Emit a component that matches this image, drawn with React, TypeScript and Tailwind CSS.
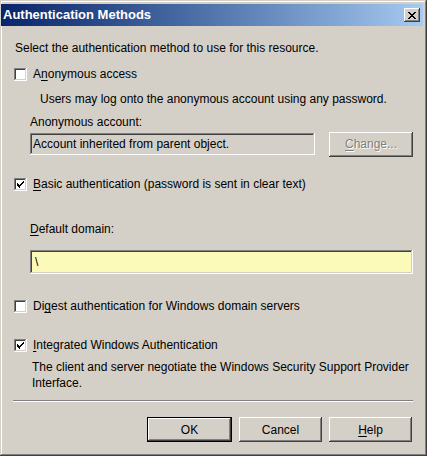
import React from 'react';

// classic 3D bevels
const raised = 'shadow-[inset_-1px_-1px_#404040,inset_1px_1px_#ffffff,inset_-2px_-2px_#808080,inset_2px_2px_#d4d0c8]';
const sunken = 'shadow-[inset_-1px_-1px_#ffffff,inset_1px_1px_#808080,inset_-2px_-2px_#d4d0c8,inset_2px_2px_#404040]';

const Checkbox = ({ checked }: { checked?: boolean }) => (
  <div className={`w-[13px] h-[13px] bg-white flex items-center justify-center shrink-0 ${sunken}`}>
    {checked && (
      <svg width="7" height="7" viewBox="0 0 7 7" shapeRendering="crispEdges">
        <path d="M0 2h1v1h-1zM0 3h2v1h-2zM0 4h3v1h-3zM1 5h2v1h-2zM2 6h1v1h-1zM3 3h1v2h-1zM4 2h1v2h-1zM5 1h1v2h-1zM6 0h1v2h-1z" fill="#000" />
      </svg>
    )}
  </div>
);

const CheckRow = ({ checked, children }: { checked?: boolean; children: React.ReactNode }) => (
  <div className="flex items-center h-[16px] ml-[14px] gap-[6px]">
    <Checkbox checked={checked} />
    <span>{children}</span>
  </div>
);

const Button = ({ children, isDefault, disabled, w = 'w-[83px]' }: { children: React.ReactNode; isDefault?: boolean; disabled?: boolean; w?: string }) => (
  <div className={`${w} h-[25px] ${isDefault ? 'border border-black' : ''}`}>
    <div className={`w-full h-full flex items-center justify-center ${raised} ${disabled ? 'text-[#808080] [text-shadow:1px_1px_0_#ffffff]' : ''}`}>
      {children}
    </div>
  </div>
);

const U = ({ children }: { children: React.ReactNode }) => <span className="underline underline-offset-2">{children}</span>;

export default function App() {
  return (
    <div className="bg-white w-[431px] h-[457px] font-['Liberation_Sans',Arial,sans-serif] text-[12px] leading-[16px] text-black">
      <div className={`w-[427px] h-[456px] bg-[#d4d0c8] pt-[4px] pr-[4px] pl-[1px] ${'shadow-[inset_-1px_-1px_#404040,inset_1px_1px_#d4d0c8,inset_-2px_-2px_#808080,inset_2px_2px_#ffffff]'}`}>
        {/* title bar */}
        <div className="h-[22px] flex items-center justify-between bg-gradient-to-r from-[#0a246a] to-[#a6caf0] pl-[2px] pr-[3px]">
          <span className="text-white font-bold text-[13px]">Authentication Methods</span>
          <div className={`w-[16px] h-[14px] bg-[#d4d0c8] flex items-center justify-center ${raised}`}>
            <svg width="8" height="7" viewBox="0 0 8 7" shapeRendering="crispEdges">
              <path d="M0 0h2v1h-2zM6 0h2v1h-2zM1 1h2v1h-2zM5 1h2v1h-2zM2 2h4v1h-4zM3 3h2v1h-2zM2 4h4v1h-4zM1 5h2v1h-2zM5 5h2v1h-2zM0 6h2v1h-2zM6 6h2v1h-2z" fill="#000" />
            </svg>
          </div>
        </div>

        <div className="flex flex-col -ml-[1px]">
          <p className="mt-[14px] ml-[15px]">Select the authentication method to use for this resource.</p>

          <div className="mt-[10px]">
            <CheckRow>A<U>n</U>onymous access</CheckRow>
          </div>
          <p className="mt-[9px] ml-[40px]">Users may log onto the anonymous account using any password.</p>
          <p className="mt-[7px] ml-[30px]">Anonymous account:</p>
          <div className="mt-[2px] ml-[30px] flex items-center gap-[14px] h-[24px]">
            <div className={`w-[285px] h-[22px] flex items-center pl-[3px] ${sunken}`}>Account inherited from parent object.</div>
            <Button disabled w="w-[84px]"><U>C</U>hange...</Button>
          </div>

          <div className="mt-[20px]">
            <CheckRow checked><U>B</U>asic authentication (password is sent in clear text)</CheckRow>
          </div>
          <p className="mt-[29px] ml-[30px]"><U>D</U>efault domain:</p>
          <div className={`mt-[13px] ml-[30px] w-[383px] h-[24px] bg-[#fbfab9] flex items-center pl-[5px] ${sunken}`}>\</div>

          <div className="mt-[24px]">
            <CheckRow>Di<U>g</U>est authentication for Windows domain servers</CheckRow>
          </div>
          <div className="mt-[23px]">
            <CheckRow checked><U>I</U>ntegrated Windows Authentication</CheckRow>
          </div>
          <p className="mt-[6px] ml-[32px] w-[381px]">The client and server negotiate the Windows Security Support Provider Interface.</p>

          <div className="mt-[9px] ml-[13px] w-[400px] border-t border-t-[#808080] border-b border-b-white" />

          <div className="mt-[15px] ml-[147px] flex gap-[7px]">
            <Button isDefault w="w-[85px]">OK</Button>
            <Button>Cancel</Button>
            <Button><U>H</U>elp</Button>
          </div>
        </div>
      </div>
    </div>
  );
}
